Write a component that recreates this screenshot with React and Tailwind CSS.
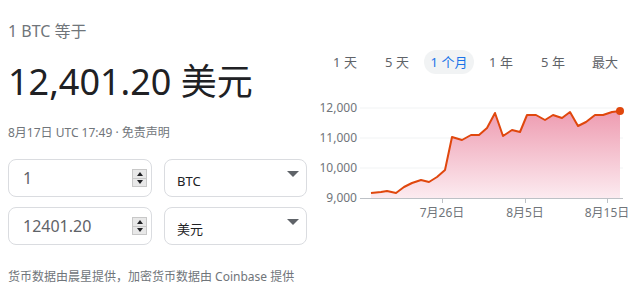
import React from 'react';

const pts = [
  [372, 193], [382, 192], [388, 191], [397, 193], [405, 187], [413, 183], [422, 180],
  [430, 182], [438, 177], [446, 170], [453, 137], [463, 140], [472, 135], [480, 135],
  [488, 128], [496, 113], [504, 136], [513, 130], [521, 132], [528, 115], [537, 115],
  [546, 120], [554, 115], [563, 118], [571, 112], [579, 126], [587, 122], [596, 115],
  [604, 115], [613, 112], [621, 111],
];

const tabs = ['1 天', '5 天', '1 个月', '1 年', '5 年', '最大'];

const Spinner = () => (
  <div className="w-[15px] h-[18px] border border-[#c8c8c8] bg-[#e8e8e8] flex flex-col">
    <div className="flex-1 flex items-center justify-center border-b border-[#c8c8c8]">
      <div className="w-0 h-0 border-x-[3px] border-x-transparent border-b-[4px] border-b-[#202124]" />
    </div>
    <div className="flex-1 flex items-center justify-center">
      <div className="w-0 h-0 border-x-[3px] border-x-transparent border-t-[4px] border-t-[#202124]" />
    </div>
  </div>
);

const NumberBox = ({ value }) => (
  <div className="w-[144px] h-[38px] border border-[#dadce0] rounded-lg flex items-center pl-[14px] pr-[4px]">
    <span className="flex-1 text-[16px] text-[#5f6368]">{value}</span>
    <Spinner />
  </div>
);

const SelectBox = ({ value }) => (
  <div className="w-[143px] h-[38px] border border-[#dadce0] rounded-lg flex items-center pl-[12px] pr-[7px]">
    <span className="flex-1 text-[13px] text-[#202124] pt-[8px]">{value}</span>
    <div className="w-0 h-0 border-x-[6px] border-x-transparent border-t-[6px] border-t-[#5f6368] mb-[8px]" />
  </div>
);

const Chart = () => {
  const line = pts.map((p, i) => `${i ? 'L' : 'M'}${p[0]} ${p[1]}`).join(' ');
  const area = `${line} L621 198 L372 198 Z`;
  return (
    <svg width="313" height="125" viewBox="320 95 313 125" className="block">
      <defs>
        <linearGradient id="fill" x1="0" y1="0" x2="0" y2="1">
          <stop offset="0%" stopColor="#ee9cb1" />
          <stop offset="100%" stopColor="#fcebf0" />
        </linearGradient>
      </defs>
      {[108, 138, 168].map((y) => (
        <line key={y} x1="361" x2="624" y1={y} y2={y} stroke="#f1f3f4" strokeWidth="1" />
      ))}
      <path d={area} fill="url(#fill)" />
      <line x1="361" x2="624" y1="198.5" y2="198.5" stroke="#bdc1c6" strokeWidth="1" />
      {[443, 526, 608].map((x) => (
        <line key={x} x1={x + 0.5} x2={x + 0.5} y1="198" y2="203" stroke="#bdc1c6" strokeWidth="1" />
      ))}
      <path d={line} fill="none" stroke="#e0470d" strokeWidth="2" strokeLinejoin="round" />
      <circle cx="621" cy="111" r="4" fill="#e0470d" />
      {[['12,000', 108], ['11,000', 138], ['10,000', 168], ['9,000', 198]].map(([t, y]) => (
        <text key={t} x="358" y={y + 4} textAnchor="end" fontSize="12" fill="#70757a">{t}</text>
      ))}
      {[['7月26日', 443], ['8月5日', 526], ['8月15日', 608]].map(([t, x]) => (
        <text key={t} x={x} y="217" textAnchor="middle" fontSize="12" fill="#70757a">{t}</text>
      ))}
    </svg>
  );
};

export default function App() {
  return (
    <div className="w-[633px] h-[300px] bg-white flex font-['Noto_Sans','Noto_Sans_CJK_SC',sans-serif] overflow-hidden">
      <div className="w-[319px] pl-[8px] flex flex-col">
        <div className="mt-[21px] h-[20px] leading-[20px] text-[16px] text-[#70757a]">1 BTC 等于</div>
        <div className="mt-[20px] h-[42px] leading-[42px] text-[36px] text-[#202124]">12,401.20 美元</div>
        <div className="mt-[21px] h-[18px] leading-[18px] text-[12px] text-[#70757a]">8月17日 UTC 17:49 · 免责声明</div>
        <div className="mt-[17px] flex flex-col gap-[10px]">
          <div className="flex gap-[12px]">
            <NumberBox value="1" />
            <SelectBox value="BTC" />
          </div>
          <div className="flex gap-[12px]">
            <NumberBox value="12401.20" />
            <SelectBox value="美元" />
          </div>
        </div>
        <div className="mt-[23px] h-[18px] leading-[18px] text-[12px] text-[#70757a]">货币数据由晨星提供，加密货币数据由 Coinbase 提供</div>
      </div>
      <div className="flex-1 flex flex-col">
        <div className="mt-[50px] grid grid-cols-6 w-[312px]">
          {tabs.map((t) => (
            <div key={t} className="flex justify-center">
              <span
                className={
                  t === '1 个月'
                    ? 'h-[24px] leading-[24px] px-[7px] rounded-full bg-[#f1f3f4] text-[13px] text-[#1a73e8]'
                    : 'h-[24px] leading-[24px] text-[13px] text-[#5f6368]'
                }
              >
                {t}
              </span>
            </div>
          ))}
        </div>
        <div className="mt-[21px]">
          <Chart />
        </div>
      </div>
    </div>
  );
}
